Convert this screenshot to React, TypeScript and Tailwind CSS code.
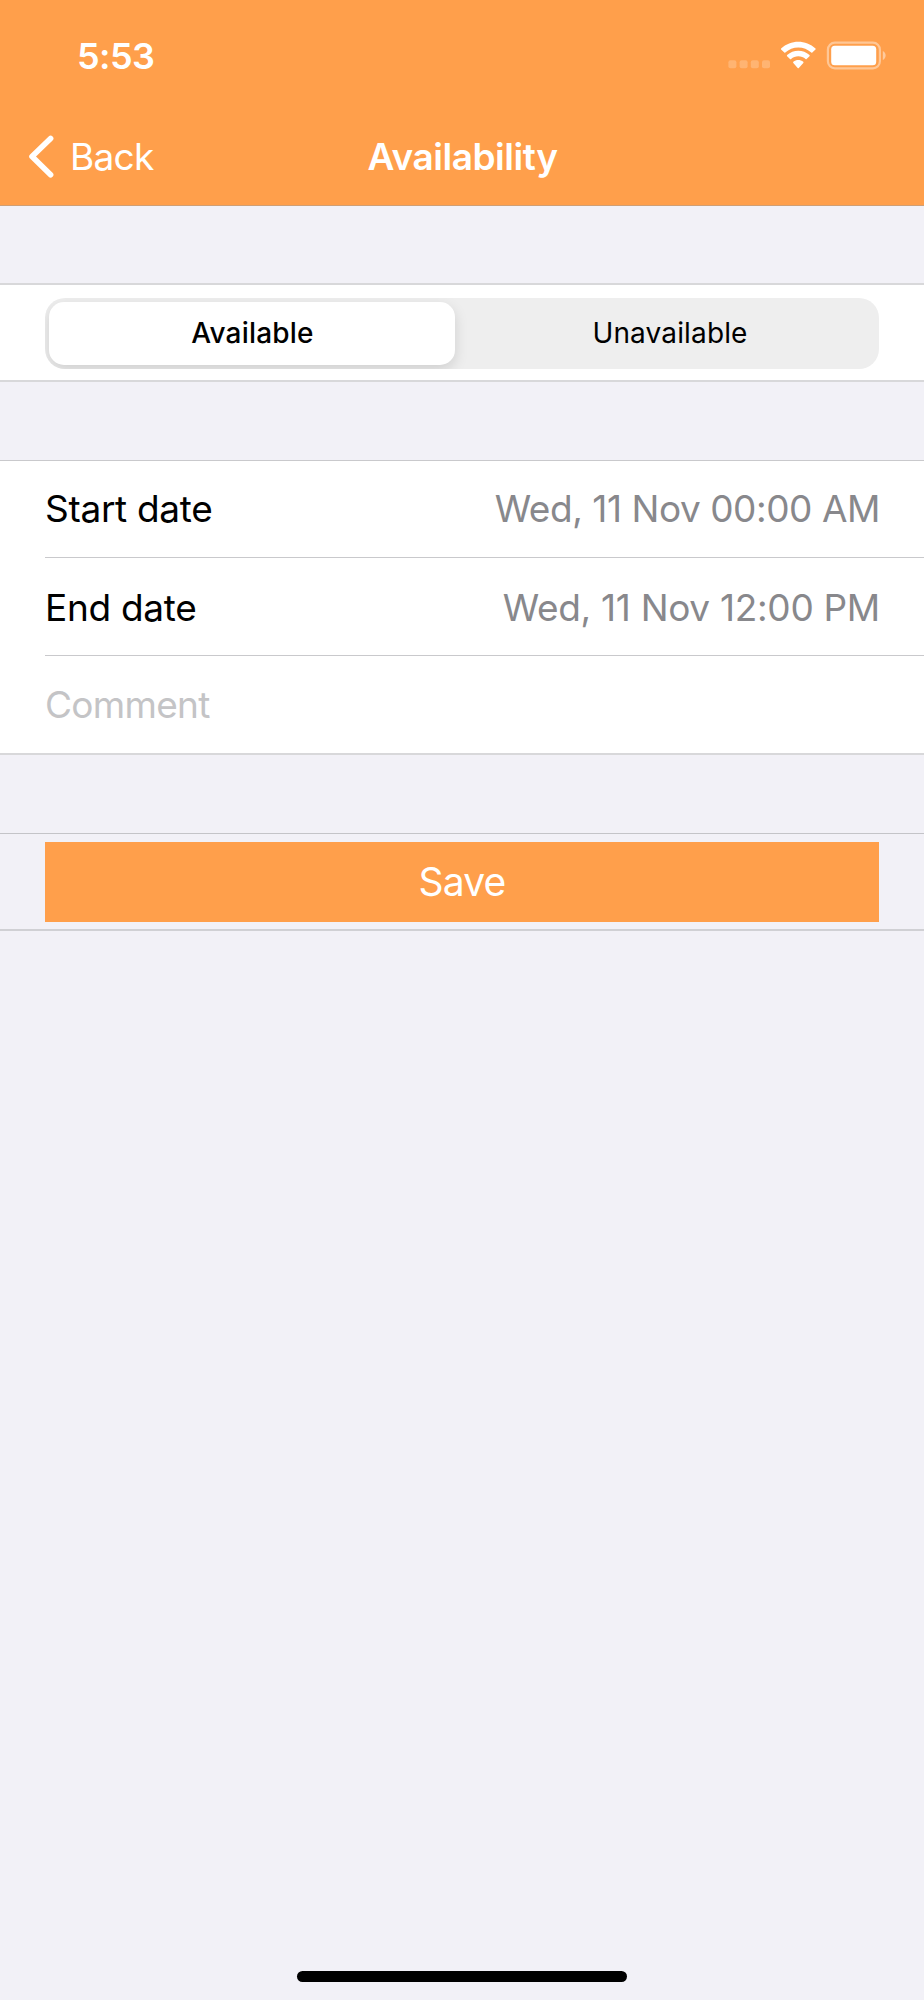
import React from "react";

function StatusIcons() {
  return (
    <svg className="block h-[32px] w-[164px]" viewBox="0 0 164 32" fill="none">
      <g fill="#fff" fillOpacity="0.22">
        <rect x="4.4" y="20.2" width="8" height="8" rx="2" />
        <rect x="15.6" y="20.2" width="8" height="8" rx="2" />
        <rect x="26.8" y="20.2" width="8" height="8" rx="2" />
        <rect x="38" y="20.2" width="8" height="8" rx="2" />
      </g>
      <g fill="#fff">
        <path d="M74.300 7.400c4.900 0 9.500 1.900 13 5.200.3.300.7.300 1 0l3.200-3c.3-.3.3-.8 0-1.100-9.600-9-24.800-9-34.400 0-.3.300-.3.800 0 1.100l3.200 3c.3.300.8.300 1 0 3.500-3.300 8.100-5.200 13-5.200z" />
        <path d="M74.300 16.200c2.700 0 5.300 1 7.300 2.800.3.300.7.300 1 0l2.900-2.800c.3-.3.3-.8 0-1.100-6.300-5.800-16.100-5.800-22.400 0-.3.300-.3.800 0 1.100l2.900 2.800c.3.300.8.300 1.100 0 2-1.800 4.500-2.800 7.200-2.800z" />
        <path d="M79.300 22.900c.3-.3.3-.8 0-1.100-2.900-2.400-7.100-2.400-10 0-.3.300-.3.800 0 1.100l4.400 5c.3.300.8.300 1.100 0z" />
      </g>
      <rect x="103.900" y="2.700" width="52" height="25.600" rx="7" stroke="#fff" strokeOpacity="0.42" strokeWidth="2.200" />
      <rect x="107.200" y="5.800" width="45" height="19.400" rx="3.500" fill="#fff" />
      <path d="M158.800 11v9c3.800-1.700 3.800-7.300 0-9z" fill="#fff" fillOpacity="0.45" />
    </svg>
  );
}

function Header() {
  return (
    <header className="h-[206px] border-b border-[#cf9f75] bg-[#ff9f4b] text-white">
      <div className="flex h-[108px] items-start justify-between pl-[77px] pr-[36px]">
        <time className="pt-[34px] text-[36px] font-semibold leading-[44px] tracking-[-0.6px]">5:53</time>
        <div className="pt-[40px]">
          <StatusIcons />
        </div>
      </div>
      <nav className="grid h-[97px] grid-cols-3 items-start">
        <button className="flex h-[97px] items-start text-left">
          <svg className="ml-[28px] mt-[26px] h-[44px] w-[28px]" viewBox="0 0 28 44" fill="none">
            <path d="M22.600 4.400 4 22.500 22.600 40.800" stroke="#fff" strokeWidth="5.600" strokeLinecap="round" strokeLinejoin="round" />
          </svg>
          <span className="ml-[14px] mt-[27px] text-[37px] leading-[44px] tracking-[-0.7px]">Back</span>
        </button>
        <h1 className="ml-px mt-[27px] whitespace-nowrap text-center text-[37px] font-semibold leading-[44px] tracking-[-0.45px]">Availability</h1>
      </nav>
    </header>
  );
}

function DateRow({ label, value, className }: { label: string; value: string; className: string }) {
  return (
    <div className={`ml-[45px] flex items-center justify-between border-b border-[#c9c9cc] pr-[44px] ${className}`}>
      <span className="tracking-[-0.3px]">{label}</span>
      <span className="text-[#88888c]">{value}</span>
    </div>
  );
}

export default function App() {
  return (
    <div className="flex h-[2000px] w-[924px] flex-col bg-[#f2f1f7] font-['Inter',sans-serif] text-black">
      <Header />
      <section className="mt-[77px] h-[99px] border-y-2 border-[#d8d8da] bg-white px-[45px] pt-[13px]">
        <div className="grid h-[71px] grid-cols-2 overflow-hidden rounded-[20px] bg-[#eeeeee] p-[4px] text-[28px] leading-[34px]">
          <button className="mr-[7px] h-[63px] rounded-[15px] bg-white pb-[2px] pl-px font-medium tracking-[0.2px] shadow-[0_5px_14px_rgba(0,0,0,0.13)]">
            Available
          </button>
          <button className="pb-[2px] pl-[3px] tracking-[0.15px]">Unavailable</button>
        </div>
      </section>
      <section className="mt-[78px] h-[295px] border-b-2 border-t border-b-[#d8d8da] border-t-[#c9c9cc] bg-white text-[37px] leading-[44px]">
        <DateRow label="Start date" value="Wed, 11 Nov 00:00 AM" className="h-[97px] tracking-[-0.45px]" />
        <DateRow label="End date" value="Wed, 11 Nov 12:00 PM" className="h-[98px] pt-[2px] tracking-[-0.3px]" />
        <input
          aria-label="Comment"
          placeholder="Comment"
          className="ml-[45px] block h-[96px] w-[834px] tracking-[-0.7px] outline-none placeholder:text-[#c4c4c6]"
        />
      </section>
      <section className="mt-[78px] h-[98px] border-b-2 border-t border-b-[#d0d0d4] border-t-[#c4c4c8] px-[45px] pt-[8px]">
        <button className="h-[80px] w-full bg-[#ff9f4b] pb-px text-[39px] leading-[44px] tracking-[-0.8px] text-white">Save</button>
      </section>
      <div className="mb-[18px] mt-auto h-[11px] w-[330px] self-center rounded-full bg-black" />
    </div>
  );
}
